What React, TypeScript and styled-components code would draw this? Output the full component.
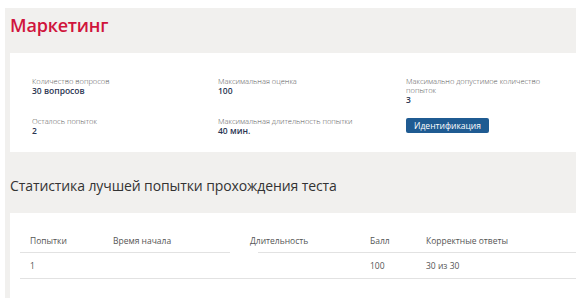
import styled, { createGlobalStyle } from 'styled-components';

const GlobalStyle = createGlobalStyle`
    html, body {
        margin: 0;
        padding: 0;
        background: #ffffff;
        font-family: "Open Sans", "Liberation Sans", sans-serif;
    }
`;

const Page = styled.div`
    width: 576px;
    height: 298px;
    padding: 8px 0 0 5px;
    box-sizing: border-box;
    overflow: hidden;
`;

const Panel = styled.div`
    background: #f1f0ee;
    padding-left: 5px;
    display: flex;
    flex-direction: column;
    height: 100%;
`;

const Title = styled.h1`
    margin: 0;
    height: 45px;
    padding-top: 5px;
    box-sizing: border-box;
    font-size: 18px;
    line-height: 24px;
    font-weight: 600;
    color: #d0143c;
    letter-spacing: -0.2px;
`;

const InfoCard = styled.div`
    background: #ffffff;
    height: 99px;
    box-sizing: border-box;
    padding: 24px 0 0 22px;
    display: grid;
    grid-template-columns: 186px 188px 150px;
    grid-template-rows: 36px auto;
    row-gap: 4px;
`;

const Field = styled.div`
    display: flex;
    flex-direction: column;
`;

const Label = styled.span`
    font-size: 7.5px;
    line-height: 9px;
    color: #5a5a5a;
    font-weight: 300;
`;

const Value = styled.span`
    font-size: 8.5px;
    line-height: 10px;
    color: #2a3552;
    font-weight: 600;
`;

const Button = styled.button`
    align-self: start;
    margin-top: 1px;
    width: 83px;
    height: 15px;
    padding: 0;
    border: none;
    border-radius: 2px;
    background: #1f5b92;
    color: #ffffff;
    font-family: inherit;
    font-size: 8.5px;
    font-weight: 400;
`;

const Heading = styled.h2`
    margin: 0;
    height: 61px;
    padding-top: 24px;
    box-sizing: border-box;
    font-size: 14px;
    line-height: 20px;
    font-weight: 400;
    color: #333333;
    letter-spacing: -0.1px;
`;

const TableCard = styled.div`
    flex: 1;
    background: #ffffff;
    padding: 16px 0 0 10px;
`;

const Row = styled.div`
    display: grid;
    grid-template-columns: 83px 127px 10px 120px 56px 1fr;
`;

const HeadCell = styled.div<{ $offset?: number }>`
    height: 24px;
    line-height: 24px;
    padding-left: 10px;
    font-size: 8.5px;
    color: #555555;
    white-space: nowrap;
    background: ${({ $offset = 0 }) =>
        `linear-gradient(#e2e2e2, #e2e2e2) ${$offset}px 100% / calc(100% - ${$offset}px) 1px no-repeat`};
`;

const Spacer = styled.div``;

const Cell = styled.div`
    height: 25px;
    line-height: 25px;
    padding-left: 10px;
    font-size: 8.5px;
    color: #555555;
    border-bottom: 1px solid #e2e2e2;
`;

export default function App() {
    return (
        <Page>
            <GlobalStyle />
            <Panel>
                <Title>Маркетинг</Title>

                <InfoCard>
                    <Field>
                        <Label>Количество вопросов</Label>
                        <Value>30 вопросов</Value>
                    </Field>
                    <Field>
                        <Label>Максимальная оценка</Label>
                        <Value>100</Value>
                    </Field>
                    <Field>
                        <Label>Максимально допустимое количество попыток</Label>
                        <Value>3</Value>
                    </Field>
                    <Field>
                        <Label>Осталось попыток</Label>
                        <Value>2</Value>
                    </Field>
                    <Field>
                        <Label>Максимальная длительность попытки</Label>
                        <Value>40 мин.</Value>
                    </Field>
                    <Button>Идентификация</Button>
                </InfoCard>

                <Heading>Статистика лучшей попытки прохождения теста</Heading>

                <TableCard>
                    <Row>
                        <HeadCell>Попытки</HeadCell>
                        <HeadCell>Время начала</HeadCell>
                        <Spacer />
                        <HeadCell $offset={18}>Длительность</HeadCell>
                        <HeadCell>Балл</HeadCell>
                        <HeadCell>Корректные ответы</HeadCell>
                    </Row>
                    <Row>
                        <Cell>1</Cell>
                        <Cell />
                        <Cell />
                        <Cell />
                        <Cell>100</Cell>
                        <Cell>30 из 30</Cell>
                    </Row>
                </TableCard>
            </Panel>
        </Page>
    );
}
